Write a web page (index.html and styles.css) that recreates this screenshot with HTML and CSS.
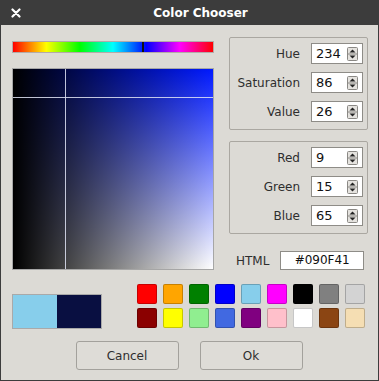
FILE: index.html
```html
<!DOCTYPE html>
<html lang="en">
<head>
  <meta charset="UTF-8" />
  <title>Color Chooser</title>
  <link rel="stylesheet" href="styles.css">
</head>
<body>
  <div class="dialog">
    <div class="titlebar">
      <span class="close">
        <svg width="10" height="10" viewBox="0 0 10 10"><path d="M1.5 1.5L8.5 8.5M8.5 1.5L1.5 8.5" stroke="#fff" stroke-width="2.2" stroke-linecap="round"/></svg>
      </span>
      <span class="title">Color Chooser</span>
    </div>

    <div class="content">
      <div class="main">
        <div class="picker">
          <div class="hue-bar"><div class="hue-marker" style="left: 64.5%;"></div></div>
          <div class="sv-square">
            <div class="cross-v" style="left: 26%;"></div>
            <div class="cross-h" style="top: 14%;"></div>
          </div>
        </div>

        <div class="fields">
          <div class="group">
            <div class="field"><label>Hue</label><div class="spin"><span>234</span><svg class="arrows" width="11" height="14" viewBox="0 0 11 14"><rect x="0.5" y="0.5" width="10" height="13" rx="1" fill="#e4e2de" stroke="#8a8884"/><line x1="1" y1="7" x2="10" y2="7" stroke="#8a8884"/><path d="M2.5 5.5L5.5 2.5L8.5 5.5Z" fill="#222"/><path d="M2.5 8.5L5.5 11.5L8.5 8.5Z" fill="#222"/></svg></div></div>
            <div class="field"><label>Saturation</label><div class="spin"><span>86</span><svg class="arrows" width="11" height="14" viewBox="0 0 11 14"><rect x="0.5" y="0.5" width="10" height="13" rx="1" fill="#e4e2de" stroke="#8a8884"/><line x1="1" y1="7" x2="10" y2="7" stroke="#8a8884"/><path d="M2.5 5.5L5.5 2.5L8.5 5.5Z" fill="#222"/><path d="M2.5 8.5L5.5 11.5L8.5 8.5Z" fill="#222"/></svg></div></div>
            <div class="field"><label>Value</label><div class="spin"><span>26</span><svg class="arrows" width="11" height="14" viewBox="0 0 11 14"><rect x="0.5" y="0.5" width="10" height="13" rx="1" fill="#e4e2de" stroke="#8a8884"/><line x1="1" y1="7" x2="10" y2="7" stroke="#8a8884"/><path d="M2.5 5.5L5.5 2.5L8.5 5.5Z" fill="#222"/><path d="M2.5 8.5L5.5 11.5L8.5 8.5Z" fill="#222"/></svg></div></div>
          </div>

          <div class="group">
            <div class="field"><label>Red</label><div class="spin"><span>9</span><svg class="arrows" width="11" height="14" viewBox="0 0 11 14"><rect x="0.5" y="0.5" width="10" height="13" rx="1" fill="#e4e2de" stroke="#8a8884"/><line x1="1" y1="7" x2="10" y2="7" stroke="#8a8884"/><path d="M2.5 5.5L5.5 2.5L8.5 5.5Z" fill="#222"/><path d="M2.5 8.5L5.5 11.5L8.5 8.5Z" fill="#222"/></svg></div></div>
            <div class="field"><label>Green</label><div class="spin"><span>15</span><svg class="arrows" width="11" height="14" viewBox="0 0 11 14"><rect x="0.5" y="0.5" width="10" height="13" rx="1" fill="#e4e2de" stroke="#8a8884"/><line x1="1" y1="7" x2="10" y2="7" stroke="#8a8884"/><path d="M2.5 5.5L5.5 2.5L8.5 5.5Z" fill="#222"/><path d="M2.5 8.5L5.5 11.5L8.5 8.5Z" fill="#222"/></svg></div></div>
            <div class="field"><label>Blue</label><div class="spin"><span>65</span><svg class="arrows" width="11" height="14" viewBox="0 0 11 14"><rect x="0.5" y="0.5" width="10" height="13" rx="1" fill="#e4e2de" stroke="#8a8884"/><line x1="1" y1="7" x2="10" y2="7" stroke="#8a8884"/><path d="M2.5 5.5L5.5 2.5L8.5 5.5Z" fill="#222"/><path d="M2.5 8.5L5.5 11.5L8.5 8.5Z" fill="#222"/></svg></div></div>
          </div>

          <div class="html-row">
            <label>HTML</label>
            <div class="hex">#090F41</div>
          </div>
        </div>
      </div>

      <div class="colors">
        <div class="preview">
          <div class="old"></div>
          <div class="new"></div>
        </div>
        <div class="swatches">
          <div class="swatch" style="background: #ff0000;"></div>
          <div class="swatch" style="background: #ffa500;"></div>
          <div class="swatch" style="background: #008000;"></div>
          <div class="swatch" style="background: #0000ff;"></div>
          <div class="swatch" style="background: #87ceeb;"></div>
          <div class="swatch" style="background: #ff00ff;"></div>
          <div class="swatch" style="background: #000000;"></div>
          <div class="swatch" style="background: #808080;"></div>
          <div class="swatch" style="background: #d3d3d3;"></div>
          <div class="swatch" style="background: #8b0000;"></div>
          <div class="swatch" style="background: #ffff00;"></div>
          <div class="swatch" style="background: #90ee90;"></div>
          <div class="swatch" style="background: #4169e1;"></div>
          <div class="swatch" style="background: #800080;"></div>
          <div class="swatch" style="background: #ffc0cb;"></div>
          <div class="swatch" style="background: #ffffff;"></div>
          <div class="swatch" style="background: #8b4513;"></div>
          <div class="swatch" style="background: #f5deb3;"></div>
        </div>
      </div>

      <div class="actions">
        <button class="btn">Cancel</button>
        <button class="btn">Ok</button>
      </div>
    </div>
  </div>
</body>
</html>
```

FILE: styles.css
```css
* {
  box-sizing: border-box;
}

body {
  margin: 0;
  padding: 0;
  font-family: 'DejaVu Sans', sans-serif;
  font-size: 12px;
  color: #2e2e2e;
  background: #dcdad5;
}

.dialog {
  width: 379px;
  height: 381px;
  display: flex;
  flex-direction: column;
}

.titlebar {
  height: 25px;
  background: #3c3c3c;
  color: #fff;
  display: flex;
  align-items: center;
}

.close {
  width: 32px;
  display: flex;
  justify-content: center;
  padding-top: 1px;
}

.close svg {
  display: block;
}

.title {
  flex: 1;
  text-align: center;
  font-weight: bold;
  padding-right: 10px;
}

.content {
  flex: 1;
  background: #dcdad5;
  border: 1px solid #3c3c3c;
  border-top: none;
  padding: 12px 10px 0 11px;
  display: flex;
  flex-direction: column;
}

.main {
  display: flex;
  gap: 15px;
}

.picker {
  width: 202px;
  padding-top: 4px;
  display: flex;
  flex-direction: column;
  gap: 15px;
}

.hue-bar {
  position: relative;
  height: 12px;
  border: 1px solid #b4aaa8;
  background: linear-gradient(to right, #f00, #ff0, #0f0, #0ff, #00f, #f0f, #f00);
}

.hue-marker {
  position: absolute;
  top: 0;
  bottom: 0;
  width: 2px;
  background: #111;
}

.sv-square {
  position: relative;
  width: 202px;
  height: 202px;
  border: 1px solid #a6a6a6;
  background:
    linear-gradient(to right, #000, rgba(0, 0, 0, 0)),
    linear-gradient(to bottom, #0019ff, #ffffff);
}

.cross-v {
  position: absolute;
  top: 0;
  bottom: 0;
  width: 1px;
  background: rgba(225, 228, 245, 0.85);
}

.cross-h {
  position: absolute;
  left: 0;
  right: 0;
  height: 1px;
  background: rgba(225, 228, 245, 0.85);
}

.fields {
  width: 139px;
  display: flex;
  flex-direction: column;
}

.group {
  height: 93px;
  border: 1px solid #aaa7a1;
  border-radius: 2px;
  padding: 5px 4px 0 4px;
  display: flex;
  flex-direction: column;
  gap: 8px;
}

.group + .group {
  margin-top: 11px;
}

.field {
  display: flex;
  align-items: center;
  justify-content: flex-end;
  gap: 11px;
}

.spin {
  width: 52px;
  height: 21px;
  background: #fff;
  border: 1px solid #8e8c87;
  display: flex;
  align-items: center;
  padding: 0 4px 0 4px;
  font-size: 13px;
  color: #111;
}

.spin span {
  flex: 1;
}

.arrows {
  display: block;
}

.html-row {
  margin-top: 17px;
  display: flex;
  align-items: center;
  padding: 0 4px 0 7px;
  gap: 11px;
}

.hex {
  flex: 1;
  height: 19px;
  line-height: 17px;
  background: #fff;
  border: 1px solid #8e8c87;
  text-align: center;
  font-size: 12px;
  color: #111;
}

.colors {
  margin-top: 14px;
  display: flex;
  gap: 35px;
}

.preview {
  margin-top: 10px;
  width: 90px;
  height: 35px;
  border: 1px solid #a9a9a9;
  display: flex;
}

.old {
  flex: 1;
  background: #87ceeb;
}

.new {
  flex: 1;
  background: #090f41;
}

.swatches {
  display: grid;
  grid-template-columns: repeat(9, 20px);
  grid-auto-rows: 20px;
  column-gap: 6px;
  row-gap: 4px;
}

.swatch {
  border: 1px solid rgba(0, 0, 0, 0.22);
  border-radius: 2px;
}

.actions {
  margin-top: 12px;
  display: flex;
  justify-content: center;
  gap: 21px;
  padding-right: 2px;
}

.btn {
  width: 103px;
  height: 29px;
  font-family: 'DejaVu Sans', sans-serif;
  font-size: 12px;
  color: #2e2e2e;
  background: #dedcd7;
  border: 1px solid #a3a19c;
  border-radius: 3px;
}
```
